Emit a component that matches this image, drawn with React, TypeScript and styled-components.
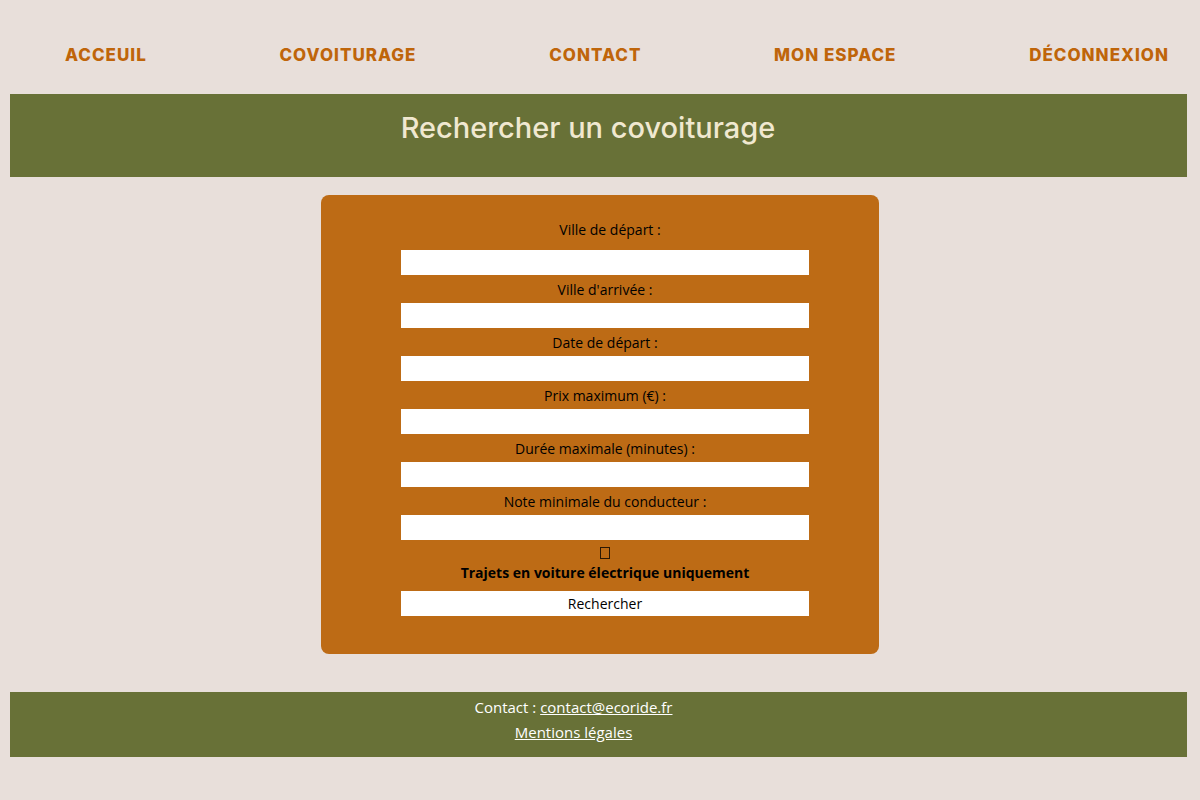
import React from "react";
import styled, { createGlobalStyle } from "styled-components";

const colors = {
  sand: "#e8dfda",
  olive: "#687137",
  rust: "#bd6b15",
  link: "#bf650a",
  cream: "#f0e8d0",
};

const GlobalStyle = createGlobalStyle`
  *, *::before, *::after { box-sizing: border-box; }
  body {
    margin: 0;
    background: ${colors.sand};
    color: #000;
    font-family: "Open Sans", "Noto Sans", sans-serif;
    font-size: 14px;
  }
`;

const Page = styled.div`
  display: flex;
  flex-direction: column;
  padding-bottom: 43px;
`;

const Nav = styled.nav`
  padding: 43px 31px 27px 65px;
`;

const NavList = styled.ul`
  display: flex;
  flex-wrap: wrap;
  justify-content: space-between;
  gap: 16px;
  margin: 0;
  padding: 0;
  list-style: none;
`;

const NavLink = styled.a`
  display: block;
  color: ${colors.link};
  font-family: Inter, "Liberation Sans", sans-serif;
  font-size: 17px;
  font-weight: 800;
  line-height: 24px;
  letter-spacing: 1px;
  text-decoration: none;
  text-transform: uppercase;
`;

const Banner = styled.header`
  margin: 0 13px 0 10px;
  padding: 14px 21px 29px 0;
  background: ${colors.olive};
  text-align: center;
`;

const Title = styled.h1`
  margin: 0;
  color: ${colors.cream};
  font-family: Inter, "Liberation Sans", sans-serif;
  font-size: 29px;
  font-weight: 500;
  line-height: 40px;
`;

const Main = styled.main`
  display: flex;
  justify-content: center;
  padding: 18px 16px 38px;
`;

const SearchForm = styled.form`
  display: flex;
  flex-direction: column;
  width: 100%;
  max-width: 558px;
  padding: 21px 70px 38px 80px;
  border-radius: 8px;
  background: ${colors.rust};
`;

const Field = styled.div`
  display: flex;
  flex-direction: column;
`;

const Label = styled.label<{ $lead?: boolean }>`
  padding: ${({ $lead }) => ($lead ? "1px 0 7px 10px" : "2px 0 0")};
  line-height: 26px;
  text-align: center;
`;

const TextInput = styled.input`
  width: 100%;
  height: 25px;
  padding: 0 8px;
  border: 0;
  border-radius: 0;
  background: #fff;
  font: inherit;
`;

const CheckField = styled.div`
  display: flex;
  flex-direction: column;
  align-items: center;
  padding: 7px 0 6px;
`;

const Checkbox = styled.input`
  appearance: none;
  width: 10px;
  height: 12px;
  margin: 0;
  border: 1px solid #2b1804;

  &:checked {
    background: #2b1804;
  }
`;

const CheckLabel = styled.label`
  padding-top: 2px;
  font-weight: 700;
  line-height: 24px;
  text-align: center;
`;

const SubmitButton = styled.button`
  width: 100%;
  height: 25px;
  padding: 0;
  border: 0;
  background: #fff;
  color: #000;
  font: inherit;
  cursor: pointer;
`;

const Footer = styled.footer`
  margin: 0 13px 0 10px;
  padding: 3px 50px 12px 0;
  background: ${colors.olive};
  color: #fff;
  font-size: 15px;
  line-height: 25px;
  text-align: center;
`;

const FooterLine = styled.p`
  margin: 0;
`;

const FooterLink = styled.a`
  color: inherit;
`;

const links = ["Acceuil", "Covoiturage", "Contact", "Mon espace", "Déconnexion"];

const fields = [
  { id: "depart", label: "Ville de départ :" },
  { id: "arrivee", label: "Ville d'arrivée :" },
  { id: "date", label: "Date de départ :" },
  { id: "prix", label: "Prix maximum (€) :" },
  { id: "duree", label: "Durée maximale (minutes) :" },
  { id: "note", label: "Note minimale du conducteur :" },
];

export default function App() {
  return (
    <Page>
      <GlobalStyle />
      <Nav>
        <NavList>
          {links.map((text) => (
            <li key={text}>
              <NavLink href="#">{text}</NavLink>
            </li>
          ))}
        </NavList>
      </Nav>
      <Banner>
        <Title>Rechercher un covoiturage</Title>
      </Banner>
      <Main>
        <SearchForm onSubmit={(event) => event.preventDefault()}>
          {fields.map(({ id, label }, index) => (
            <Field key={id}>
              <Label htmlFor={id} $lead={index === 0}>
                {label}
              </Label>
              <TextInput id={id} name={id} type="text" />
            </Field>
          ))}
          <CheckField>
            <Checkbox id="electrique" name="electrique" type="checkbox" />
            <CheckLabel htmlFor="electrique">Trajets en voiture électrique uniquement</CheckLabel>
          </CheckField>
          <SubmitButton type="submit">Rechercher</SubmitButton>
        </SearchForm>
      </Main>
      <Footer>
        <FooterLine>
          Contact : <FooterLink href="mailto:contact@ecoride.fr">contact@ecoride.fr</FooterLink>
        </FooterLine>
        <FooterLine>
          <FooterLink href="#">Mentions légales</FooterLink>
        </FooterLine>
      </Footer>
    </Page>
  );
}
